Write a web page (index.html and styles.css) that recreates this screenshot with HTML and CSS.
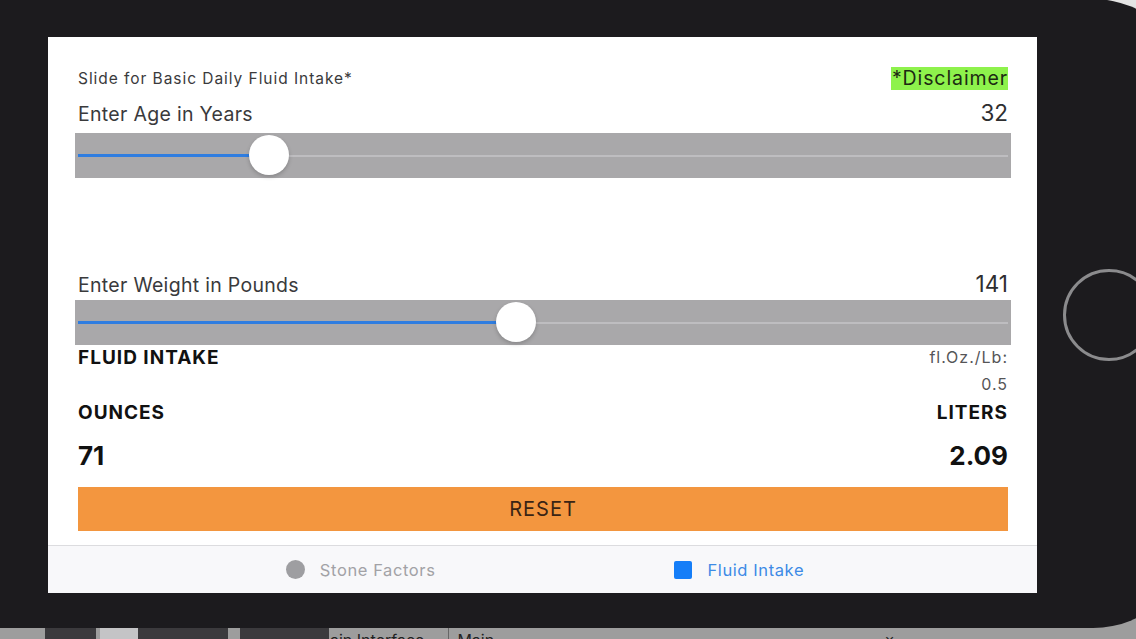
FILE: index.html
```html
<!DOCTYPE html>
<html lang="en">
  <head>
    <meta charset="UTF-8" />
    <meta name="viewport" content="width=device-width, initial-scale=1.0" />
    <title>Fluid Intake</title>
    <link rel="stylesheet" href="styles.css">
  </head>
  <body>
    <div class="phone">
      <div class="screen">
        <div class="content">
          <div class="head-row">
            <span class="intro">Slide for Basic Daily Fluid Intake*</span>
            <span class="disclaimer">*Disclaimer</span>
          </div>

          <div class="field-row age-row">
            <span class="label">Enter Age in Years</span>
            <span class="value">32</span>
          </div>
          <div class="slider">
            <div class="track">
              <div class="fill" style="width: 191px"></div>
              <div class="thumb" style="left: 191px"></div>
            </div>
          </div>

          <div class="field-row weight-row">
            <span class="label">Enter Weight in Pounds</span>
            <span class="value">141</span>
          </div>
          <div class="slider slider-weight">
            <div class="track">
              <div class="fill" style="width: 438px"></div>
              <div class="thumb" style="left: 438px"></div>
            </div>
          </div>

          <div class="intake-row">
            <span class="heading">FLUID INTAKE</span>
            <div class="ratio">
              <div>fl.Oz./Lb:</div>
              <div>0.5</div>
            </div>
          </div>
          <div class="units-row">
            <span class="heading">OUNCES</span>
            <span class="heading">LITERS</span>
          </div>
          <div class="totals-row">
            <span class="total">71</span>
            <span class="total">2.09</span>
          </div>

          <button class="reset">RESET</button>
        </div>

        <div class="tabbar">
          <div class="tab">
            <span class="tab-dot"></span>
            <span>Stone Factors</span>
          </div>
          <div class="tab tab-active">
            <span class="tab-square"></span>
            <span>Fluid Intake</span>
          </div>
        </div>
      </div>
      <div class="home-button"></div>
    </div>

    <!-- xcode window peeking in under the simulator -->
    <div class="xcode-bar">
      <span class="xbox xbox-a"></span>
      <span class="xbox xbox-b"></span>
      <span class="xbox xbox-c"></span>
      <span class="xbox xbox-d"></span>
      <span class="xtext">ain Interface</span>
      <span class="xsep"></span>
      <span class="xtext">Main</span>
      <span class="xclose">×</span>
    </div>
  </body>
</html>
```

FILE: styles.css
```css
body {
  margin: 0;
  height: 639px;
  overflow: hidden;
  font-family: Inter, "Noto Sans", sans-serif;
  background: linear-gradient(#e4e4e4, #d0d0d0 560px, #9d9d9d 600px);
}
.phone {
  box-sizing: border-box;
  width: 1193px;
  height: 629px;
  margin-top: -1px;
  padding: 38px 0 35px 48px;
  display: flex;
  align-items: center;
  background: #1c1b1e;
  border-radius: 0 100px 100px 0;
}
.screen {
  width: 989px;
  height: 556px;
  background: #fff;
  display: flex;
  flex-direction: column;
  flex-shrink: 0;
}
.content {
  padding: 0 29px 0 30px;
  display: flex;
  flex-direction: column;
}
.head-row {
  margin-top: 29px;
  height: 24px;
  display: flex;
  justify-content: space-between;
  align-items: center;
}
.intro {
  font-size: 15.5px;
  letter-spacing: 0.95px;
  color: #3a3a3c;
}
.disclaimer {
  background: #8ef24c;
  font-size: 19.5px;
  letter-spacing: 0.9px;
  line-height: 23px;
  color: #1c2a12;
  padding: 0 0 0 1px;
}
.field-row {
  display: flex;
  justify-content: space-between;
  align-items: baseline;
  height: 26px;
  line-height: 23px;
}
.age-row {
  margin-top: 11px;
}
.weight-row {
  margin-top: 94px;
}
.label {
  font-size: 19.5px;
  letter-spacing: 0.3px;
  color: #3a3a3c;
}
.value {
  font-size: 22.5px;
  color: #2e2e30;
}
.slider {
  margin: 6px -3px 0;
  height: 45px;
  background: #a9a8aa;
  display: flex;
  align-items: center;
  padding: 0 3px;
}
.slider-weight {
  margin-top: 2px;
}
.track {
  position: relative;
  flex: 1;
  height: 2px;
  background: #bebdc0;
}
.fill {
  height: 3px;
  margin-top: -1px;
  background: #2f7de0;
}
.thumb {
  position: absolute;
  top: -20px;
  width: 40px;
  height: 40px;
  margin-left: -20px;
  border-radius: 50%;
  background: #fff;
  box-shadow: 0 2px 4px rgba(0, 0, 0, 0.2);
}
.intake-row {
  display: flex;
  justify-content: space-between;
  align-items: flex-start;
  margin-top: -1px;
}
.heading {
  font-size: 19px;
  font-weight: 700;
  letter-spacing: 1px;
  line-height: 27px;
  color: #111;
}
.ratio {
  font-size: 16px;
  letter-spacing: 1px;
  line-height: 27px;
  color: #555557;
  text-align: right;
}
.units-row,
.totals-row {
  display: flex;
  justify-content: space-between;
}
.units-row {
  margin-top: 1px;
}
.totals-row {
  margin-top: 15px;
}
.total {
  font-size: 26px;
  font-weight: 700;
  line-height: 30px;
  color: #111;
}
.reset {
  margin-top: 16px;
  height: 44px;
  border: none;
  background: #f3963f;
  font-family: inherit;
  font-size: 20px;
  letter-spacing: 1px;
  color: #3a2414;
  padding: 0;
}
.tabbar {
  margin-top: auto;
  height: 47px;
  padding-left: 5px;
  border-top: 1px solid #dcdcdf;
  background: #f8f8fa;
  display: flex;
  justify-content: center;
  align-items: center;
  gap: 239px;
  font-size: 16.5px;
  letter-spacing: 0.6px;
  color: #a2a2a6;
}
.tab {
  display: flex;
  align-items: center;
  gap: 15px;
}
.tab-dot {
  width: 19px;
  height: 19px;
  border-radius: 50%;
  background: #9e9ea1;
}
.tab-active {
  color: #3d8be6;
}
.tab-square {
  width: 18px;
  height: 18px;
  border-radius: 2px;
  background: #157ef8;
}
.home-button {
  flex-shrink: 0;
  margin-left: 26px;
  width: 86px;
  height: 86px;
  border: 3px solid #8b8b8d;
  border-radius: 50%;
}
.xcode-bar {
  height: 11px;
  overflow: hidden;
  display: flex;
  align-items: flex-start;
  padding-left: 45px;
  font-size: 16px;
  line-height: 20px;
  color: #222;
}
.xbox {
  height: 11px;
  background: #3b3a3d;
}
.xbox-a {
  width: 51px;
}
.xbox-b {
  width: 38px;
  margin-left: 4px;
  background: #c4c4c6;
}
.xbox-c {
  width: 90px;
}
.xbox-d {
  width: 89px;
  margin-left: 12px;
}
.xtext {
  margin-top: 2px;
  padding-left: 1px;
}
.xsep {
  width: 1px;
  height: 11px;
  margin: 0 7px 0 24px;
  background: #666;
}
.xclose {
  margin-left: 390px;
  margin-top: 1px;
}
```
